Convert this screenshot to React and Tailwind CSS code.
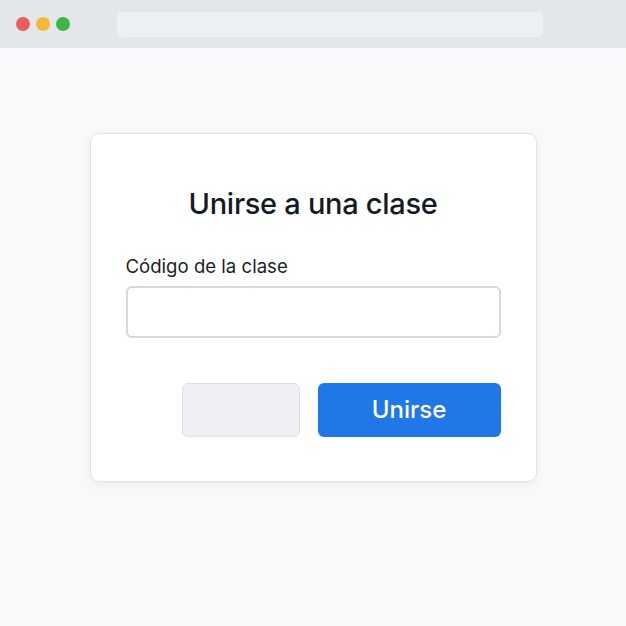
export default function App() {
  return (
    <div
      className="w-[626px] h-[626px] bg-[#f8f9fa] flex flex-col overflow-hidden"
      style={{ fontFamily: "Inter, 'Noto Sans', sans-serif" }}
    >
      {/* browser chrome */}
      <div className="h-[48px] bg-[#e3e6eb] flex items-center pl-[16px] shrink-0">
        <div className="flex gap-[6px]">
          <span className="w-[14px] h-[14px] rounded-full bg-[#ec5c5a]" />
          <span className="w-[14px] h-[14px] rounded-full bg-[#f2b935]" />
          <span className="w-[14px] h-[14px] rounded-full bg-[#3eb548]" />
        </div>
        <div className="ml-[47px] w-[426px] h-[25px] rounded-[5px] bg-[#edf0f3]" />
      </div>

      <div className="flex justify-center pt-[85px]">
        <div className="w-[447px] h-[349px] bg-white rounded-[9px] border border-[#dfe2e6] shadow-[0_2px_10px_rgba(0,0,0,0.06)] px-[35px] pt-[52px]">
          <h1 className="text-center text-[29px] leading-[36px] font-medium text-[#141a23] tracking-[-0.3px]">
            Unirse a una clase
          </h1>
          <label className="block mt-[32px] text-[18.6px] leading-[24px] text-[#1c1f24]">
            Código de la clase
          </label>
          <input
            type="text"
            className="mt-[8px] w-full h-[52px] rounded-[6px] border-2 border-[#d5d8dc] bg-white outline-none px-3"
          />
          <div className="flex justify-end gap-[18px] mt-[45px]">
            <button className="w-[118px] h-[54px] rounded-[6px] bg-[#eef0f3] border border-[#dde0e4]" />
            <button className="w-[183px] h-[54px] rounded-[6px] bg-[#1f78e6] text-white text-[24px] font-medium">
              Unirse
            </button>
          </div>
        </div>
      </div>
    </div>
  );
}
